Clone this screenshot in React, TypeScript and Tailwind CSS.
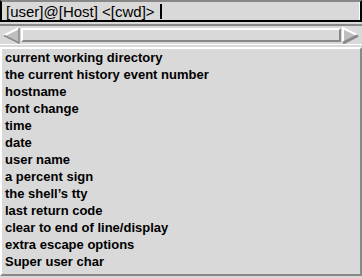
import React from 'react';

const items = [
  'current working directory',
  'the current history event number',
  'hostname',
  'font change',
  'time',
  'date',
  'user name',
  'a percent sign',
  'the shell\u2019s tty',
  'last return code',
  'clear to end of line/display',
  'extra escape options',
  'Super user char',
];

const App: React.FC = () => {
  return (
    <div className="w-[362px] h-[278px] bg-[#d9d9d9] overflow-hidden" style={{ fontFamily: '"Liberation Sans", Arial, sans-serif' }}>
      {/* Prompt text field */}
      <div className="h-[22px] border-t-2 border-t-[#888888] border-l-2 border-l-black border-r-2 border-r-black border-b-2 border-b-black">
        <div className="h-full flex items-center pl-[4px] border-r border-r-white text-[15px] leading-none text-black">
          <span>[user]@[Host] &lt;[cwd]&gt;</span>
          <span className="ml-[5px] w-[2px] h-[15px] bg-black" />
        </div>
      </div>

      {/* Horizontal scrollbar */}
      <div className="mt-[2px] h-[21px] border-t-2 border-t-[#888888] border-b border-b-white flex items-stretch px-[2px] py-[1px]">
        <svg width="18" height="17" viewBox="0 0 18 17" className="shrink-0">
          <polygon points="2,8.5 17,1 17,16" fill="#bfbfbf" />
          <polyline points="17,1 2,8.5" stroke="#ffffff" strokeWidth="2" fill="none" />
          <polyline points="2,8.5 17,16 17,1" stroke="#888888" strokeWidth="1.5" fill="none" />
        </svg>
        <div className="flex-1 mx-[1px] my-[1px] border-t-2 border-l-2 border-t-white border-l-white border-b-2 border-r-2 border-b-[#888888] border-r-[#888888] bg-[#d9d9d9]" />
        <svg width="18" height="17" viewBox="0 0 18 17" className="shrink-0">
          <polygon points="1,1 16,8.5 1,16" fill="#bfbfbf" />
          <polyline points="1,16 1,1 16,8.5" stroke="#ffffff" strokeWidth="2" fill="none" />
          <polyline points="16,8.5 1,16" stroke="#888888" strokeWidth="3" fill="none" />
        </svg>
      </div>

      {/* List */}
      <div className="mt-[2px] h-[229px] border-t-2 border-l-2 border-t-white border-l-white border-r-2 border-b-2 border-r-[#888888] border-b-[#888888] pl-[3px]">
        {items.map((t) => (
          <div key={t} className="h-[17px] leading-[17px] text-[13px] font-bold text-black whitespace-nowrap">
            {t}
          </div>
        ))}
      </div>
      <div className="mt-[2px] h-[1px] bg-white" />
    </div>
  );
};

export default App;
